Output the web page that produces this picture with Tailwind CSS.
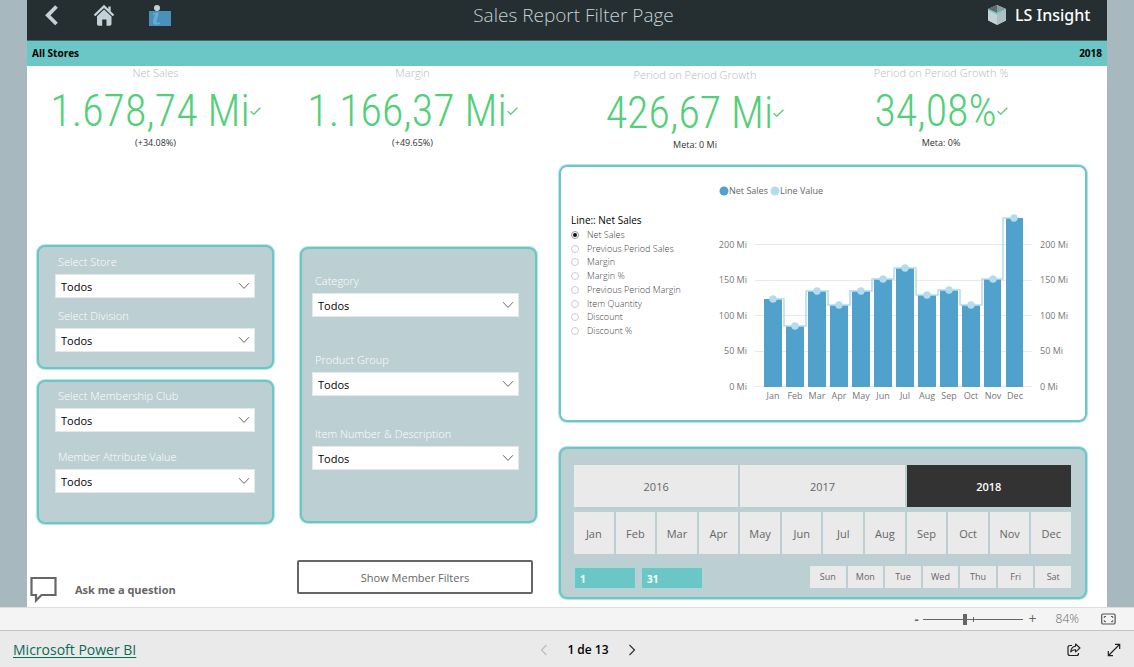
<!DOCTYPE html>
<html lang="en">
<head>
<meta charset="utf-8">
<meta name="viewport" content="width=device-width, initial-scale=1">
<title>Sales Report Filter Page</title>
<script src="https://cdn.jsdelivr.net/npm/@tailwindcss/browser@4"></script>
</head>
<body class="flex min-h-screen flex-col bg-[#a7b9be] font-['Open_Sans','Noto_Sans',sans-serif] text-[#666]">

<svg class="hidden" aria-hidden="true">
  <symbol id="chevron" viewBox="0 0 12 8"><path d="M1 1.2 6 6.4 11 1.2" fill="none" stroke="#666" stroke-width="1"/></symbol>
  <symbol id="tick" viewBox="0 0 11 8"><path d="M.6 4.2 3.8 7.2 10.4.8" fill="none" stroke="#53cf79" stroke-width="1.3"/></symbol>
</svg>

<main class="mx-[27px] flex flex-1 flex-col bg-white">
  <header class="flex h-[41px] items-start justify-between border-b border-[#3f6b6b] bg-[#252e30] pr-[14px] pl-[17px] text-[#c3d2d6]">
    <nav class="flex w-[140px] items-start pt-[4px]">
      <button aria-label="Back" class="mr-[34px]"><svg class="block h-[22px] w-[15px]" viewBox="0 0 15 22"><path d="M12.500 2.500 3.800 11.300 12.500 20" fill="none" stroke="#c3d2d6" stroke-width="3.800"/></svg></button>
      <button aria-label="Home" class="mr-[33px]"><svg class="block h-[22px] w-[22px]" viewBox="0 0 22 22"><path d="M1.500 11.500 11 2.300 20.500 11.500M16.500 2.500v5" fill="none" stroke="#c3d2d6" stroke-width="2.400"/><path d="M4 12.300 11 5.600l7.500 6.900V20q0 1.700-1.700 1.700H13.500V15.500H9.200v6.200H5.600Q4 21.700 4 20z" fill="#c3d2d6"/></svg></button>
      <button aria-label="Information"><svg class="block h-[23px] w-[24px]" viewBox="0 0 24 23"><circle cx="9" cy="4" r="3" fill="#c3d2d6"/><path d="M1 7h22v15H1z" fill="#4a90b8"/><path d="M5 9.200 11 8.200 8.500 17.500Q8.500 19.300 12 18.300V20Q4.500 22.300 5 17.300L6.800 10.500H5z" fill="#68abd4"/></svg></button>
    </nav>
    <h1 class="pt-[2px] pr-[24px] text-[19px] leading-[26px] font-light">Sales Report Filter Page</h1>
    <div class="flex w-[106px] items-center gap-[8px] pt-[4px] text-white">
      <svg class="h-[22px] w-[20px] shrink-0" viewBox="0 0 20 22"><path d="M10 1 19 5v11.500L10 21 1 16.500V5z" fill="#c3d2d6"/><path d="M10 1v8L1 5z" fill="#5d6c70"/><path d="M10 1v8l9-4z" fill="#899ca1"/><path d="M10 10.500 19 6v10.500L10 21z" fill="#aebfc4"/><path d="M1 5.500 10 10l9-4.500" fill="none" stroke="#72cac9" stroke-width="1.200"/></svg>
      <span class="font-['Noto_Sans',sans-serif] text-[16px] leading-[22px] font-medium whitespace-nowrap">LS Insight</span>
    </div>
  </header>
  <div class="flex h-[25px] items-center justify-between bg-[#6bc7c6] px-[5px] text-[10px] font-bold text-black">
    <span>All Stores</span><span>2018</span>
  </div>

  <section class="grid h-[98px] grid-cols-[257fr_257fr_308fr_184fr_74fr] text-center text-[11px] text-[#b8b8b8]">
    <div>
      <h2 class="leading-[14px] font-light">Net Sales</h2>
      <p class="mt-[4px] flex items-center justify-center font-['Roboto_Condensed','Liberation_Sans_Narrow',sans-serif] text-[44px] leading-[54px] font-light whitespace-nowrap text-[#53cf79]">1.678,74 Mi<svg class="h-[8px] w-[11px]"><use href="#tick"/></svg></p>
      <p class="text-[9px] leading-[10px] text-[#333]">(+34.08%)</p>
    </div>
    <div>
      <h2 class="leading-[14px] font-light">Margin</h2>
      <p class="mt-[4px] flex items-center justify-center font-['Roboto_Condensed','Liberation_Sans_Narrow',sans-serif] text-[44px] leading-[54px] font-light whitespace-nowrap text-[#53cf79]">1.166,37 Mi<svg class="h-[8px] w-[11px]"><use href="#tick"/></svg></p>
      <p class="text-[9px] leading-[10px] text-[#333]">(+49.65%)</p>
    </div>
    <div class="pt-[2px]">
      <h2 class="leading-[14px] font-light">Period on Period Growth</h2>
      <p class="mt-[4px] flex items-center justify-center font-['Roboto_Condensed','Liberation_Sans_Narrow',sans-serif] text-[44px] leading-[54px] font-light whitespace-nowrap text-[#53cf79]">426,67 Mi<svg class="h-[8px] w-[11px]"><use href="#tick"/></svg></p>
      <p class="text-[9px] leading-[10px] text-[#333]">Meta: 0 Mi</p>
    </div>
    <div>
      <h2 class="leading-[14px] font-light">Period on Period Growth %</h2>
      <p class="mt-[4px] flex items-center justify-center font-['Roboto_Condensed','Liberation_Sans_Narrow',sans-serif] text-[44px] leading-[54px] font-light whitespace-nowrap text-[#53cf79]">34,08%<svg class="h-[8px] w-[11px]"><use href="#tick"/></svg></p>
      <p class="text-[9px] leading-[10px] text-[#333]">Meta: 0%</p>
    </div>
  </section>

  <div class="flex flex-1 pr-[20px] pl-[3px]">
    <div class="mr-[23px] flex flex-[244] flex-col pt-[81px]">
      <section class="ml-[7px] flex flex-col gap-[10px] rounded-[8px] border-2 border-[#6bc7c6] bg-[#bccfd3] pt-[7px] pr-[17px] pb-[15px] pl-[16px] ring-1 ring-[#b9e4e3]">
        <div>
          <label for="store" class="block pl-[3px] text-[11px] leading-[16px] font-light text-white">Select Store</label>
          <div class="relative mt-[4px]"><select id="store" class="block h-[24px] w-full appearance-none border border-[#e4e8e9] bg-white pt-[2px] pl-[5px] text-[11px] text-black"><option>Todos</option></select><svg class="pointer-events-none absolute top-[8px] right-[5px] h-[8px] w-[12px]"><use href="#chevron"/></svg></div>
        </div>
        <div>
          <label for="division" class="block pl-[3px] text-[11px] leading-[16px] font-light text-white">Select Division</label>
          <div class="relative mt-[4px]"><select id="division" class="block h-[24px] w-full appearance-none border border-[#e4e8e9] bg-white pt-[2px] pl-[5px] text-[11px] text-black"><option>Todos</option></select><svg class="pointer-events-none absolute top-[8px] right-[5px] h-[8px] w-[12px]"><use href="#chevron"/></svg></div>
        </div>
      </section>
      <section class="mt-[11px] ml-[7px] flex flex-col gap-[17px] rounded-[8px] border-2 border-[#6bc7c6] bg-[#bccfd3] pt-[6px] pr-[17px] pb-[29px] pl-[16px] ring-1 ring-[#b9e4e3]">
        <div>
          <label for="club" class="block pl-[3px] text-[11px] leading-[16px] font-light text-white">Select Membership Club</label>
          <div class="relative mt-[4px]"><select id="club" class="block h-[24px] w-full appearance-none border border-[#e4e8e9] bg-white pt-[2px] pl-[5px] text-[11px] text-black"><option>Todos</option></select><svg class="pointer-events-none absolute top-[8px] right-[5px] h-[8px] w-[12px]"><use href="#chevron"/></svg></div>
        </div>
        <div>
          <label for="attribute" class="block pl-[3px] text-[11px] leading-[16px] font-light text-white">Member Attribute Value</label>
          <div class="relative mt-[4px]"><select id="attribute" class="block h-[24px] w-full appearance-none border border-[#e4e8e9] bg-white pt-[2px] pl-[5px] text-[11px] text-black"><option>Todos</option></select><svg class="pointer-events-none absolute top-[8px] right-[5px] h-[8px] w-[12px]"><use href="#chevron"/></svg></div>
        </div>
      </section>
      <button class="mt-[52px] flex items-center gap-[18px] text-left text-[11px] font-bold">
        <svg class="h-[27px] w-[27px]" viewBox="0 0 27 27"><path d="M1.500 2h24v17H11.500l-5.500 5.500V19H1.500z" fill="none" stroke="#666" stroke-width="2.200"/></svg>
        <span class="pt-[2px]">Ask me a question</span>
      </button>
    </div>

    <div class="mr-[22px] flex flex-[240] flex-col pt-[83px]">
      <section class="ml-[3px] rounded-[8px] border-2 border-[#6bc7c6] bg-[#bccfd3] pt-[24px] pr-[16px] pb-[51px] pl-[10px] ring-1 ring-[#b9e4e3]">
        <div>
          <label for="category" class="block pl-[3px] text-[11px] leading-[16px] font-light text-white">Category</label>
          <div class="relative mt-[4px]"><select id="category" class="block h-[24px] w-full appearance-none border border-[#e4e8e9] bg-white pt-[2px] pl-[5px] text-[11px] text-black"><option>Todos</option></select><svg class="pointer-events-none absolute top-[8px] right-[5px] h-[8px] w-[12px]"><use href="#chevron"/></svg></div>
        </div>
        <div class="mt-[35px]">
          <label for="group" class="block pl-[3px] text-[11px] leading-[16px] font-light text-white">Product Group</label>
          <div class="relative mt-[4px]"><select id="group" class="block h-[24px] w-full appearance-none border border-[#e4e8e9] bg-white pt-[2px] pl-[5px] text-[11px] text-black"><option>Todos</option></select><svg class="pointer-events-none absolute top-[8px] right-[5px] h-[8px] w-[12px]"><use href="#chevron"/></svg></div>
        </div>
        <div class="mt-[30px]">
          <label for="item" class="block pl-[3px] text-[11px] leading-[16px] font-light text-white">Item Number &amp; Description</label>
          <div class="relative mt-[4px]"><select id="item" class="block h-[24px] w-full appearance-none border border-[#e4e8e9] bg-white pt-[2px] pl-[5px] text-[11px] text-black"><option>Todos</option></select><svg class="pointer-events-none absolute top-[8px] right-[5px] h-[8px] w-[12px]"><use href="#chevron"/></svg></div>
        </div>
      </section>
      <button class="mt-[37px] mr-[4px] h-[34px] rounded-[2px] border-2 border-[#666] bg-white pt-[2px] text-[11px]">Show Member Filters</button>
    </div>

    <div class="flex flex-[528] flex-col pt-[1px]">
      <section class="flex rounded-[8px] border-2 border-[#6bc7c6] ring-1 ring-[#b9e4e3]">
        <fieldset class="w-[148px] shrink-0 pt-[45px] pl-[10px] text-[9px] font-light">
          <legend class="float-left w-full text-[10px] leading-[16px] font-normal text-black">Line:: Net Sales</legend>
          <div class="clear-both grid h-[110px] grid-rows-8 items-center whitespace-nowrap text-[#444]">
            <label class="flex items-center gap-[8px] leading-[12px]"><input type="radio" name="line" checked class="size-[8px] appearance-none rounded-full border border-[#ccc] checked:border-[#999] checked:bg-[#111] checked:bg-clip-content checked:p-px">Net Sales</label>
            <label class="flex items-center gap-[8px] leading-[12px]"><input type="radio" name="line" class="size-[8px] appearance-none rounded-full border border-[#ccc] checked:border-[#999] checked:bg-[#111] checked:bg-clip-content checked:p-px">Previous Period Sales</label>
            <label class="flex items-center gap-[8px] leading-[12px]"><input type="radio" name="line" class="size-[8px] appearance-none rounded-full border border-[#ccc] checked:border-[#999] checked:bg-[#111] checked:bg-clip-content checked:p-px">Margin</label>
            <label class="flex items-center gap-[8px] leading-[12px]"><input type="radio" name="line" class="size-[8px] appearance-none rounded-full border border-[#ccc] checked:border-[#999] checked:bg-[#111] checked:bg-clip-content checked:p-px">Margin %</label>
            <label class="flex items-center gap-[8px] leading-[12px]"><input type="radio" name="line" class="size-[8px] appearance-none rounded-full border border-[#ccc] checked:border-[#999] checked:bg-[#111] checked:bg-clip-content checked:p-px">Previous Period Margin</label>
            <label class="flex items-center gap-[8px] leading-[12px]"><input type="radio" name="line" class="size-[8px] appearance-none rounded-full border border-[#ccc] checked:border-[#999] checked:bg-[#111] checked:bg-clip-content checked:p-px">Item Quantity</label>
            <label class="flex items-center gap-[8px] leading-[12px]"><input type="radio" name="line" class="size-[8px] appearance-none rounded-full border border-[#ccc] checked:border-[#999] checked:bg-[#111] checked:bg-clip-content checked:p-px">Discount</label>
            <label class="flex items-center gap-[8px] leading-[12px]"><input type="radio" name="line" class="size-[8px] appearance-none rounded-full border border-[#ccc] checked:border-[#999] checked:bg-[#111] checked:bg-clip-content checked:p-px">Discount %</label>
          </div>
        </fieldset>
        <svg class="block h-auto min-w-0 flex-1 text-[9px]" viewBox="709 167 376 253" role="img" aria-label="Net Sales and Line Value by month">
          <g class="fill-[#666]">
            <circle cx="724" cy="191" r="4.500" class="fill-[#50a1cb]"/><text x="729" y="194">Net Sales</text>
            <circle cx="775" cy="191" r="4.500" class="fill-[#b3dcf0]"/><text x="780" y="194">Line Value</text>
          </g>
          <path d="M755 244.500h277M755 280.500h277M755 315.500h277M755 351.500h277M755 386.500h277" stroke="#e9e9e9"/>
          <g class="fill-[#777]" text-anchor="end">
            <text x="747" y="248">200 Mi</text><text x="747" y="283">150 Mi</text><text x="747" y="319">100 Mi</text><text x="747" y="354">50 Mi</text><text x="747" y="390">0 Mi</text>
          </g>
          <g class="fill-[#777]">
            <text x="1040" y="248">200 Mi</text><text x="1040" y="283">150 Mi</text><text x="1040" y="319">100 Mi</text><text x="1040" y="354">50 Mi</text><text x="1040" y="390">0 Mi</text>
          </g>
          <path fill="#50a1cb" d="M764 299h18v88h-18zM786 326h18v61h-18zM808 291h18v96h-18zM830 305h18v82h-18zM852 291h18v96h-18zM874 279h18v108h-18zM896 268h18v119h-18zM918 295h18v92h-18zM940 290h18v97h-18zM962 305h18v82h-18zM984 279h17v108h-17zM1006 218h17v169h-17z"/>
          <path fill="none" stroke="#b3dcf0" stroke-width="1.500" d="M773 299h11v27h22v-35h22v14h22v-14h22v-12h22v-11h22v27h22v-5h22v15h22v-26h21v-61h11"/>
          <g fill="#b3dcf0">
            <circle cx="773" cy="299" r="3.700"/><circle cx="795" cy="326" r="3.700"/><circle cx="817" cy="291" r="3.700"/><circle cx="839" cy="305" r="3.700"/><circle cx="861" cy="291" r="3.700"/><circle cx="883" cy="279" r="3.700"/><circle cx="905" cy="268" r="3.700"/><circle cx="927" cy="295" r="3.700"/><circle cx="949" cy="290" r="3.700"/><circle cx="971" cy="305" r="3.700"/><circle cx="993" cy="279" r="3.700"/><circle cx="1014" cy="218" r="3.700"/>
          </g>
          <g class="fill-[#777]" text-anchor="middle">
            <text x="773" y="399">Jan</text><text x="795" y="399">Feb</text><text x="817" y="399">Mar</text><text x="839" y="399">Apr</text><text x="861" y="399">May</text><text x="883" y="399">Jun</text><text x="905" y="399">Jul</text><text x="927" y="399">Aug</text><text x="949" y="399">Sep</text><text x="971" y="399">Oct</text><text x="993" y="399">Nov</text><text x="1015" y="399">Dec</text>
          </g>
        </svg>
      </section>

      <section class="mt-[25px] rounded-[8px] border-2 border-[#6bc7c6] bg-[#bccfd3] pt-[16px] pr-[14px] pb-[8px] pl-[13px] text-[11px] ring-1 ring-[#b9e4e3]">
        <div class="grid grid-cols-3 gap-[2px]">
          <button class="h-[42px] bg-[#eaeaea] pt-[2px]">2016</button><button class="h-[42px] bg-[#eaeaea] pt-[2px]">2017</button><button class="h-[42px] bg-[#333] pt-[2px] font-semibold text-white">2018</button>
        </div>
        <div class="mt-[5px] grid grid-cols-12 gap-[2px]">
          <button class="h-[42px] bg-[#eaeaea] pt-[2px]">Jan</button><button class="h-[42px] bg-[#eaeaea] pt-[2px]">Feb</button><button class="h-[42px] bg-[#eaeaea] pt-[2px]">Mar</button><button class="h-[42px] bg-[#eaeaea] pt-[2px]">Apr</button><button class="h-[42px] bg-[#eaeaea] pt-[2px]">May</button><button class="h-[42px] bg-[#eaeaea] pt-[2px]">Jun</button><button class="h-[42px] bg-[#eaeaea] pt-[2px]">Jul</button><button class="h-[42px] bg-[#eaeaea] pt-[2px]">Aug</button><button class="h-[42px] bg-[#eaeaea] pt-[2px]">Sep</button><button class="h-[42px] bg-[#eaeaea] pt-[2px]">Oct</button><button class="h-[42px] bg-[#eaeaea] pt-[2px]">Nov</button><button class="h-[42px] bg-[#eaeaea] pt-[2px]">Dec</button>
        </div>
        <div class="mt-[12px] flex justify-between">
          <div class="mt-[1px] flex gap-[5px]">
            <input aria-label="First day" value="1" class="h-[22px] w-[62px] border border-[#a6dbdb] bg-[#6bc7c6] pt-[2px] pl-[5px] text-[10px] font-bold text-white">
            <input aria-label="Last day" value="31" class="h-[22px] w-[62px] border border-[#a6dbdb] bg-[#6bc7c6] pt-[2px] pl-[5px] text-[10px] font-bold text-white">
          </div>
          <div class="grid w-[261px] grid-cols-7 gap-[2px] text-[9px]">
            <button class="h-[22px] bg-[#eaeaea]">Sun</button><button class="h-[22px] bg-[#eaeaea]">Mon</button><button class="h-[22px] bg-[#eaeaea]">Tue</button><button class="h-[22px] bg-[#eaeaea]">Wed</button><button class="h-[22px] bg-[#eaeaea]">Thu</button><button class="h-[22px] bg-[#eaeaea]">Fri</button><button class="h-[22px] bg-[#eaeaea]">Sat</button>
          </div>
        </div>
      </section>
    </div>
  </div>
</main>

<div class="flex h-[23px] items-center justify-end border-t border-[#ddd] bg-[#f4f4f4] pr-[18px]">
  <button aria-label="Zoom out" class="mr-[4px] text-[13px] leading-[16px] font-bold">-</button>
  <div class="relative h-[12px] w-[100px]">
    <span class="absolute top-[4px] left-[50px] h-[5px] w-px bg-[#666]"></span>
    <input type="range" aria-label="Zoom" min="0" max="100" value="42" class="absolute inset-0 m-0 h-[12px] w-full appearance-none bg-[linear-gradient(#666,#666)] bg-[length:100%_1px] bg-[position:0_6px] bg-no-repeat [&::-webkit-slider-thumb]:h-[11px] [&::-webkit-slider-thumb]:w-[4px] [&::-webkit-slider-thumb]:appearance-none [&::-webkit-slider-thumb]:bg-[#666]">
  </div>
  <button aria-label="Zoom in" class="mr-[19px] ml-[6px] text-[14px] leading-[16px]">+</button>
  <span class="text-[12px] leading-[16px] font-light">84%</span>
  <button aria-label="Fit to page" class="ml-[22px]"><svg class="block h-[12px] w-[15px]" viewBox="0 0 15 12"><rect x=".7" y="1" width="13.400" height="10" rx="1.300" fill="none" stroke="#555" stroke-width="1.200"/><path d="M3.300 5V3.500H5M10 3.500h1.700V5M11.700 7.200v1.500H10M5 8.700H3.300V7.200" fill="none" stroke="#555"/></svg></button>
</div>

<footer class="grid h-[37px] grid-cols-3 items-center border-t border-[#c4c4c4] bg-[#eaeaea] px-[13px] pt-[2px]">
  <a href="#" class="justify-self-start text-[14px] leading-[18px] text-[#0b6a55] underline underline-offset-2">Microsoft Power BI</a>
  <div class="flex items-center justify-center gap-[19px] pl-[42px] text-[12px] font-semibold whitespace-nowrap text-black">
    <button aria-label="Previous page"><svg class="block h-[12px] w-[8px]" viewBox="0 0 8 12"><path d="M6.500 1 1.500 6l5 5" fill="none" stroke="#bbb" stroke-width="1.200"/></svg></button>
    <span>1 de 13</span>
    <button aria-label="Next page"><svg class="block h-[12px] w-[8px]" viewBox="0 0 8 12"><path d="M1.500 1 6.500 6l-5 5" fill="none" stroke="#333" stroke-width="1.200"/></svg></button>
  </div>
  <div class="flex items-center gap-[26px] justify-self-end">
    <button aria-label="Share"><svg class="block h-[14px] w-[14px]" viewBox="0 0 14 14"><path d="M5 2.500H3Q1 2.500 1 4.500v6q0 2 2 2h6.500q2 0 2-2V10" fill="none" stroke="#222" stroke-width="1.200"/><path d="M8.500 1 13 5 8.500 8.800V6.700Q5.500 6.500 3.700 8.800 4.200 3.800 8.500 3.300z" fill="none" stroke="#222" stroke-width="1.100" stroke-linejoin="round"/></svg></button>
    <button aria-label="Full screen"><svg class="block h-[14px] w-[14px]" viewBox="0 0 14 14"><path d="M1.500 12.500 12.500 1.500M8 1.300h4.700V6M1.300 8v4.700H6" fill="none" stroke="#222" stroke-width="1.200"/></svg></button>
  </div>
</footer>
</body>
</html>
